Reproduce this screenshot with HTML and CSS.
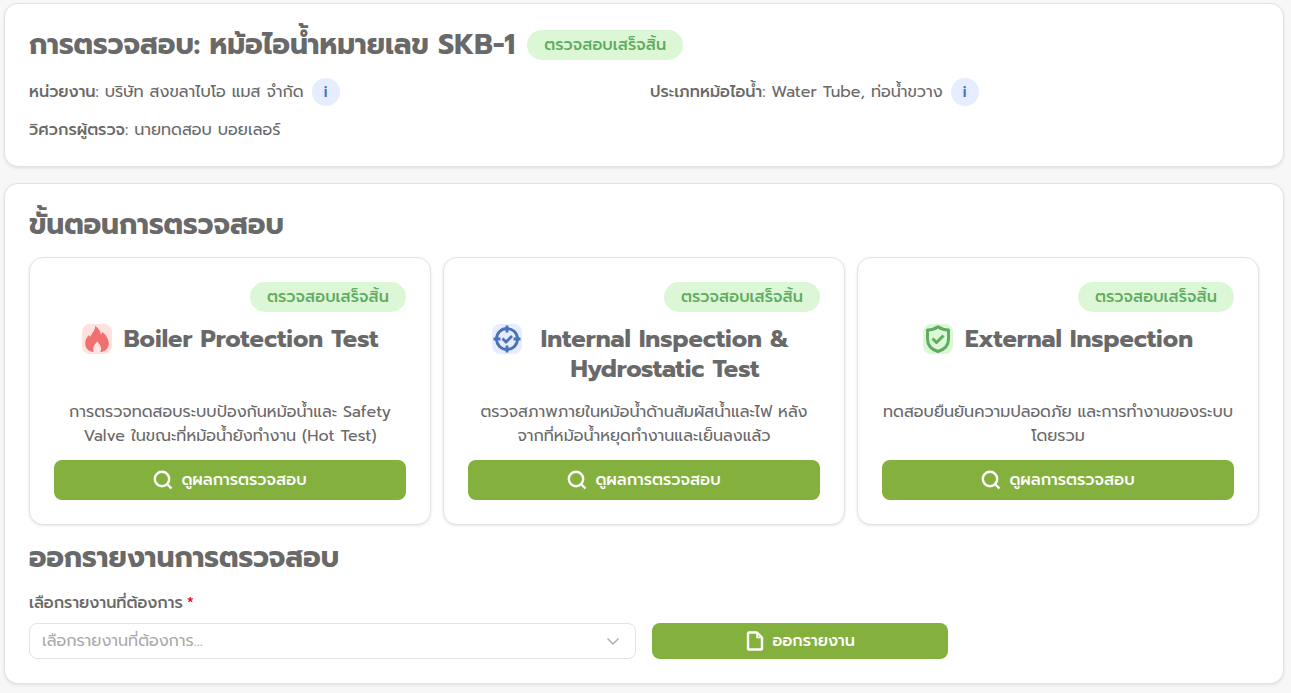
FILE: index.html
```html
<!DOCTYPE html>
<html lang="th">
<head>
  <meta charset="UTF-8">
  <meta name="viewport" content="width=device-width, initial-scale=1.0">
  <title>การตรวจสอบ: หม้อไอน้ำหมายเลข SKB-1</title>
  <link rel="stylesheet" href="styles.css">
</head>
<body>

<section class="panel">
  <div class="title-row">
    <h1 class="heading">การตรวจสอบ: หม้อไอน้ำหมายเลข SKB-1</h1>
    <span class="badge">ตรวจสอบเสร็จสิ้น</span>
  </div>
  <div class="info">
    <div class="info-item">
      <span><b>หน่วยงาน</b>: บริษัท สงขลาไบโอ แมส จำกัด</span>
      <button type="button" class="info-btn">i</button>
    </div>
    <div class="info-item">
      <span><b>ประเภทหม้อไอน้ำ</b>: Water Tube, ท่อน้ำขวาง</span>
      <button type="button" class="info-btn">i</button>
    </div>
    <div class="info-item">
      <span><b>วิศวกรผู้ตรวจ</b>: นายทดสอบ บอยเลอร์</span>
    </div>
  </div>
</section>

<section class="panel">
  <h2 class="heading">ขั้นตอนการตรวจสอบ</h2>

  <div class="steps">
    <div class="step">
      <span class="badge">ตรวจสอบเสร็จสิ้น</span>
      <div class="step-title">
        <svg class="step-icon red" viewBox="0 0 30 30">
          <path fill="currentColor" d="M13 2C16.500 4 18.800 7.500 18.800 10.500C19.500 10 20 9 20.200 7.800C24 11 26.800 15.500 26.800 19.500C26.800 23.500 24 27 19.500 28C18.500 28 18.300 27.500 18.800 26.500C20 23 17.500 20 15.200 17.500C13 20 10.500 23 11.400 26C11.800 27.500 11.500 28 10.500 28C6 27 3.200 23.500 3.200 19.500C3.200 15.500 5 13 7 11C7.500 12 8 12.500 8.700 12.500C9.500 8.500 13.500 7 13 2Z"/>
        </svg>
        <h3>Boiler Protection Test</h3>
      </div>
      <p>การตรวจทดสอบระบบป้องกันหม้อน้ำและ Safety Valve ในขณะที่หม้อน้ำยังทำงาน (Hot Test)</p>
      <button type="button" class="btn">
        <svg class="btn-icon" viewBox="0 0 20 20" fill="none" stroke="currentColor" stroke-width="2.400"><circle cx="9" cy="9" r="7.200"/><path d="M14 14l4.500 4.500"/></svg>
        ดูผลการตรวจสอบ
      </button>
    </div>

    <div class="step">
      <span class="badge">ตรวจสอบเสร็จสิ้น</span>
      <div class="step-title">
        <svg class="step-icon blue" viewBox="0 0 30 30" fill="none" stroke="currentColor" stroke-width="2.800">
          <circle cx="15" cy="15" r="10.500"/>
          <path d="M15 1.500v7M15 21.500v7M1.500 15h7M21.500 15h7"/>
          <path d="M10.500 14.500l3.500 3.500l6-6"/>
        </svg>
        <h3>Internal Inspection &amp; Hydrostatic Test</h3>
      </div>
      <p>ตรวจสภาพภายในหม้อน้ำด้านสัมผัสน้ำและไฟ หลังจากที่หม้อน้ำหยุดทำงานและเย็นลงแล้ว</p>
      <button type="button" class="btn">
        <svg class="btn-icon" viewBox="0 0 20 20" fill="none" stroke="currentColor" stroke-width="2.400"><circle cx="9" cy="9" r="7.200"/><path d="M14 14l4.500 4.500"/></svg>
        ดูผลการตรวจสอบ
      </button>
    </div>

    <div class="step">
      <span class="badge">ตรวจสอบเสร็จสิ้น</span>
      <div class="step-title">
        <svg class="step-icon green" viewBox="0 0 30 30" fill="none" stroke="currentColor" stroke-width="3" stroke-linejoin="round">
          <path d="M15 2.800C12 5 8.500 5.800 4.500 6V15C4.500 21 8.500 25.500 15 27.500C21.500 25.500 25.500 21 25.500 15V6C21.500 5.800 18 5 15 2.800Z"/>
          <path d="M9.500 14.500l4 4l7-7"/>
        </svg>
        <h3>External Inspection</h3>
      </div>
      <p>ทดสอบยืนยันความปลอดภัย และการทำงานของระบบโดยรวม</p>
      <button type="button" class="btn">
        <svg class="btn-icon" viewBox="0 0 20 20" fill="none" stroke="currentColor" stroke-width="2.400"><circle cx="9" cy="9" r="7.200"/><path d="M14 14l4.500 4.500"/></svg>
        ดูผลการตรวจสอบ
      </button>
    </div>
  </div>

  <h2 class="heading">ออกรายงานการตรวจสอบ</h2>

  <form class="report">
    <div class="field">
      <label for="report">เลือกรายงานที่ต้องการ<span class="required">*</span></label>
      <div class="select-box">
        <select id="report">
          <option>เลือกรายงานที่ต้องการ...</option>
        </select>
        <svg class="arrow" viewBox="0 0 14 14" fill="none" stroke="currentColor" stroke-width="1.400"><path d="M1.500 4.500L7 10l5.500-5.500"/></svg>
      </div>
    </div>
    <button type="button" class="btn btn-report">
      <svg class="btn-icon" viewBox="0 0 20 20" fill="none" stroke="currentColor" stroke-width="2.400" stroke-linejoin="round"><path d="M4 1.500h8l5 5V17.500a1 1 0 0 1-1 1H4a1 1 0 0 1-1-1V2.500a1 1 0 0 1 1-1z"/><path stroke-width="1.600" d="M12 2v4.500H17"/></svg>
      ออกรายงาน
    </button>
  </form>
</section>

</body>
</html>
```
FILE: styles.css
```css
* {
  box-sizing: border-box;
}

body {
  margin: 0;
  padding: 3px 7px 8px 4px;
  background-color: #f7f7f7;
  color: #696969;
  font-family: Prompt, Inter, "Noto Sans Thai", "Noto Sans", sans-serif;
  font-size: 16px;
  line-height: 24px;
}

button, select {
  font-family: inherit;
  font-size: 16px;
}

.panel, .step {
  background-color: #fff;
  border: 1px solid #e3e3e3;
  border-radius: 14px;
  padding: 24px;
  box-shadow: 0 1px 3px rgba(0, 0, 0, 0.1);
}

.panel + .panel {
  margin-top: 16px;
}

.heading {
  margin: 0;
  font-size: 28px;
  line-height: 34px;
  font-weight: 700;
}

h2.heading {
  margin-bottom: 15px;
}

.title-row {
  display: flex;
  align-items: center;
  gap: 12px;
  margin-bottom: 16px;
}

.badge {
  background-color: #dbf7d6;
  color: #5fab5f;
  font-weight: 500;
  line-height: 30px;
  padding: 0 17px;
  border-radius: 15px;
  white-space: nowrap;
}

.info {
  display: grid;
  grid-template-columns: 1fr 1fr;
  gap: 12px;
}

.info-item {
  display: flex;
  align-items: center;
  gap: 8px;
}

.info-item b {
  font-weight: 500;
}

.info-btn {
  width: 28px;
  height: 28px;
  padding: 0;
  border: none;
  border-radius: 50%;
  background-color: #e5edff;
  color: #4a72b8;
  font-weight: 500;
  cursor: pointer;
}

/* Steps */
.steps {
  display: grid;
  grid-template-columns: repeat(3, 1fr);
  gap: 12px;
  margin-bottom: 16px;
}

.step {
  display: flex;
  flex-direction: column;
  text-align: center;
}

.step .badge {
  align-self: flex-end;
}

.step-title {
  display: flex;
  justify-content: center;
  align-items: flex-start;
  gap: 12px;
  min-height: 60px;
  margin-top: 12px;
}

.step-title h3 {
  margin: 0;
  max-width: 262px;
  font-size: 24px;
  line-height: 30px;
  font-weight: 700;
}

.step-icon {
  flex: none;
  width: 30px;
  height: 30px;
  border-radius: 8px;
}

.red {
  color: #f07070;
  background-color: #ffe2e0;
}

.blue {
  color: #4a72b8;
  background-color: #e5edff;
}

.green {
  color: #5fab5f;
  background-color: #dbf7d6;
}

.step p {
  margin: 16px 0 12px;
  min-height: 48px;
}

.btn {
  display: flex;
  align-items: center;
  justify-content: center;
  gap: 8px;
  height: 40px;
  border: none;
  border-radius: 8px;
  background-color: #84b13d;
  color: #fff;
  font-weight: 500;
  cursor: pointer;
}

.btn-icon {
  width: 20px;
  height: 20px;
}

/* Report form */
.report {
  display: grid;
  grid-template-columns: repeat(4, 1fr);
  gap: 16px;
  align-items: end;
}

.field {
  grid-column: span 2;
}

.field label {
  display: block;
  margin-bottom: 6px;
  line-height: 27px;
  font-weight: 500;
}

.required {
  margin-left: 4px;
  color: #e81123;
}

.select-box {
  position: relative;
}

.select-box select {
  display: block;
  width: 100%;
  height: 36px;
  padding: 0 36px 0 12px;
  border: 1px solid #e3e3e3;
  border-radius: 8px;
  background-color: #fff;
  color: #aaa;
  appearance: none;
}

.arrow {
  position: absolute;
  top: 11px;
  right: 16px;
  width: 14px;
  height: 14px;
  color: #aaa;
  pointer-events: none;
}

.btn-report {
  height: 36px;
}

@media (max-width: 800px) {
  .info, .steps, .report {
    grid-template-columns: 1fr;
  }

  .field {
    grid-column: auto;
  }
}
```
